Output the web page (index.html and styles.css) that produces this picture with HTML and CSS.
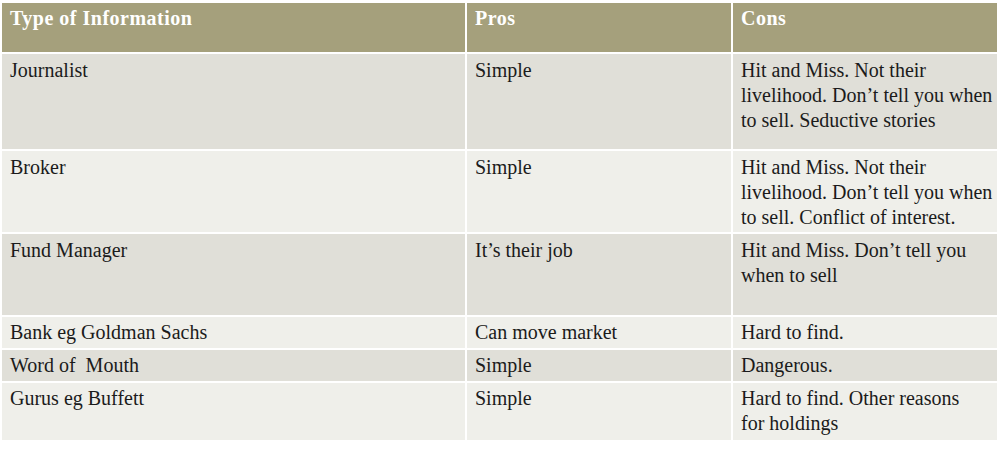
FILE: index.html
```html
<!DOCTYPE html>
<html>
<head>
<meta charset="utf-8">
<link rel="stylesheet" href="styles.css">
</head>
<body>
<table class="info">
  <colgroup>
    <col class="c1"><col class="c2"><col class="c3">
  </colgroup>
  <thead>
    <tr class="head">
      <th>Type of Information</th>
      <th>Pros</th>
      <th>Cons</th>
    </tr>
  </thead>
  <tbody>
    <tr class="odd r1">
      <td>Journalist</td>
      <td>Simple</td>
      <td>Hit and Miss. Not their<br>livelihood. Don’t tell you when<br>to sell. Seductive stories</td>
    </tr>
    <tr class="even r2">
      <td>Broker</td>
      <td>Simple</td>
      <td>Hit and Miss. Not their<br>livelihood. Don’t tell you when<br>to sell. Conflict of interest.</td>
    </tr>
    <tr class="odd r3">
      <td>Fund Manager</td>
      <td>It’s their job</td>
      <td>Hit and Miss. Don’t tell you<br>when to sell</td>
    </tr>
    <tr class="even r4">
      <td>Bank eg Goldman Sachs</td>
      <td>Can move market</td>
      <td>Hard to find.</td>
    </tr>
    <tr class="odd r5">
      <td>Word of&nbsp; Mouth</td>
      <td>Simple</td>
      <td>Dangerous.</td>
    </tr>
    <tr class="even r6">
      <td>Gurus eg Buffett</td>
      <td>Simple</td>
      <td>Hard to find. Other reasons<br>for holdings</td>
    </tr>
  </tbody>
</table>
</body>
</html>
```

FILE: styles.css
```css
html, body {
  margin: 0;
  padding: 0;
  background: #ffffff;
}
body {
  padding: 1px 0 0 0;
}
.info {
  border-collapse: separate;
  border-spacing: 2px;
  table-layout: fixed;
  width: 999px;
  font-family: "Liberation Serif", "Times New Roman", serif;
  font-size: 20px;
  line-height: 25px;
  color: #1b1b1b;
}
.c1 { width: 463px; }
.c2 { width: 264px; }
.c3 { width: 264px; }
th, td {
  text-align: left;
  vertical-align: top;
  padding: 4px 0 0 8px;
  box-sizing: border-box;
  white-space: nowrap;
  overflow: hidden;
}
th {
  background: #a5a07c;
  color: #ffffff;
  font-weight: bold;
  letter-spacing: 0.5px;
  height: 49px;
  padding-top: 3px;
}
.odd td { background: #e0dfd8; }
.even td { background: #efefea; }
.r1 td { height: 95px; }
.r2 td { height: 81px; }
.r3 td { height: 81px; }
.r4 td { height: 31px; padding-top: 3px; }
.r5 td { height: 31px; padding-top: 3px; }
.r6 td { height: 57px; padding-top: 3px; }
```
